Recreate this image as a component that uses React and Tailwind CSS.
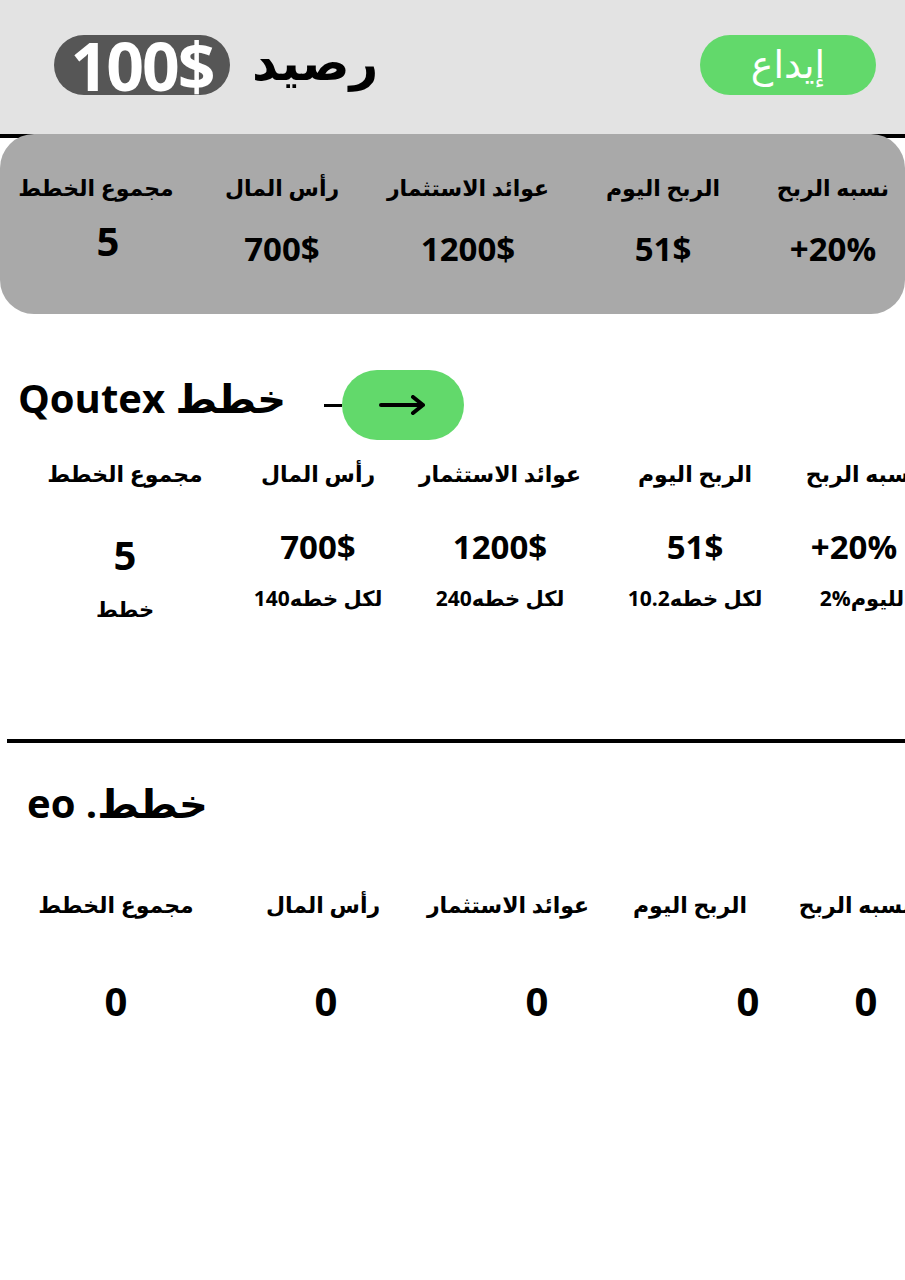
import React from 'react';

const FONT = { fontFamily: '"Open Sans", "DejaVu Sans", sans-serif' };

const topStats = [
    { label: 'مجموع الخطط', value: '5', big: true },
    { label: 'رأس المال', value: '700$' },
    { label: 'عوائد الاستثمار', value: '1200$' },
    { label: 'الربح اليوم', value: '51$' },
    { label: 'نسبه الربح', value: '+20%' },
];

const qoutexStats = [
    { label: 'مجموع الخطط', value: '5', sub: 'خطط', big: true },
    { label: 'رأس المال', value: '700$', sub: 'لكل خطه140' },
    { label: 'عوائد الاستثمار', value: '1200$', sub: 'لكل خطه240' },
    { label: 'الربح اليوم', value: '51$', sub: 'لكل خطه10.2' },
    { label: 'نسبه الربح', value: '+20%', sub: 'لليوم%2', shift: true },
];

const eoLabels = ['مجموع الخطط', 'رأس المال', 'عوائد الاستثمار', 'الربح اليوم', 'نسبه الربح'];

const App = () => {
    return (
        <div className="min-h-[1280px] w-[905px] bg-white overflow-hidden text-black" style={FONT}>
            {/* Header */}
            <div className="h-[138px] bg-[#e3e3e3] border-b-4 border-black flex items-center justify-between pl-[54px] pr-[29px] pb-[4px]">
                <div className="flex items-center gap-[22px]">
                    <div className="h-[60px] w-[176px] rounded-full bg-[#565656] flex items-center justify-center">
                        <span className="text-white font-bold text-[66px] leading-none tracking-[-2px]">100$</span>
                    </div>
                    <span className="font-bold text-[50px] leading-none pb-2">رصيد</span>
                </div>
                <button className="h-[60px] w-[176px] rounded-full bg-[#62d96b] text-white text-[38px] leading-none flex items-center justify-center pb-1">
                    إيداع
                </button>
            </div>

            {/* Summary card */}
            <div className="-mt-1 h-[180px] rounded-[34px] bg-[#a9a9a9] pt-[38px]">
                <div className="grid grid-cols-[172px_200px_172px_218px_122px] pl-[10px] justify-items-center">
                    {topStats.map(s => (
                        <div key={s.label} className="flex flex-col items-center">
                            <span className="font-bold text-[22px] leading-[30px]">{s.label}</span>
                            <span className={`font-bold leading-none ${s.big ? 'text-[40px] mt-[19px] ml-[24px]' : 'text-[33px] mt-[30px]'}`}>{s.value}</span>
                        </div>
                    ))}
                </div>
            </div>

            {/* Qoutex plans */}
            <div className="mt-[56px] flex items-center pl-[18px]">
                <span dir="rtl" className="font-bold text-[40px] leading-none pb-[14px]">خطط Qoutex</span>
                <div className="ml-[38px] w-[18px] h-[3px] bg-black"></div>
                <button className="h-[70px] w-[122px] rounded-full bg-[#62d96b] flex items-center justify-center">
                    <svg width="48" height="20" viewBox="0 0 48 20" fill="none" stroke="black" strokeWidth="4" strokeLinecap="round" strokeLinejoin="round">
                        <path d="M2 10h42M34 2l10 8-10 8" />
                    </svg>
                </button>
            </div>

            <div className="mt-[18px] overflow-hidden">
                <div className="grid grid-cols-[200px_186px_178px_212px_122px] pl-[25px] w-[930px] justify-items-center">
                    {qoutexStats.map(s => (
                        <div key={s.label} className="flex flex-col items-center whitespace-nowrap">
                            <span className="font-bold text-[22px] leading-[30px]">{s.label}</span>
                            <span className={`font-bold leading-none ${s.big ? 'text-[40px] mt-[47px]' : 'text-[33px] mt-[42px]'} ${s.shift ? 'mr-[16px]' : ''}`}>{s.value}</span>
                            <span className={`font-bold text-[21px] leading-none ${s.big ? 'mt-[24px]' : 'mt-[25px]'}`}>{s.sub}</span>
                        </div>
                    ))}
                </div>
            </div>

            <div className="mt-[119px] ml-[7px] h-[4px] bg-black"></div>

            {/* eo plans */}
            <div className="mt-[40px] pl-[27px]">
                <span dir="rtl" className="inline-block font-bold text-[40px] leading-none">خطط. eo</span>
            </div>

            <div className="mt-[65px] overflow-hidden">
                <div className="grid grid-cols-[200px_214px_156px_208px_122px] pl-[16px] w-[930px] justify-items-center">
                    {eoLabels.map(l => (
                        <span key={l} className="font-bold text-[22px] leading-[30px] whitespace-nowrap">{l}</span>
                    ))}
                </div>
                <div className="mt-[62px] grid grid-cols-[200px_220px_202px_220px_16px] pl-[16px] w-[930px] justify-items-center">
                    {[0, 1, 2, 3, 4].map(i => (
                        <span key={i} className="font-bold text-[40px] leading-none">0</span>
                    ))}
                </div>
            </div>
        </div>
    );
};

export default App;
